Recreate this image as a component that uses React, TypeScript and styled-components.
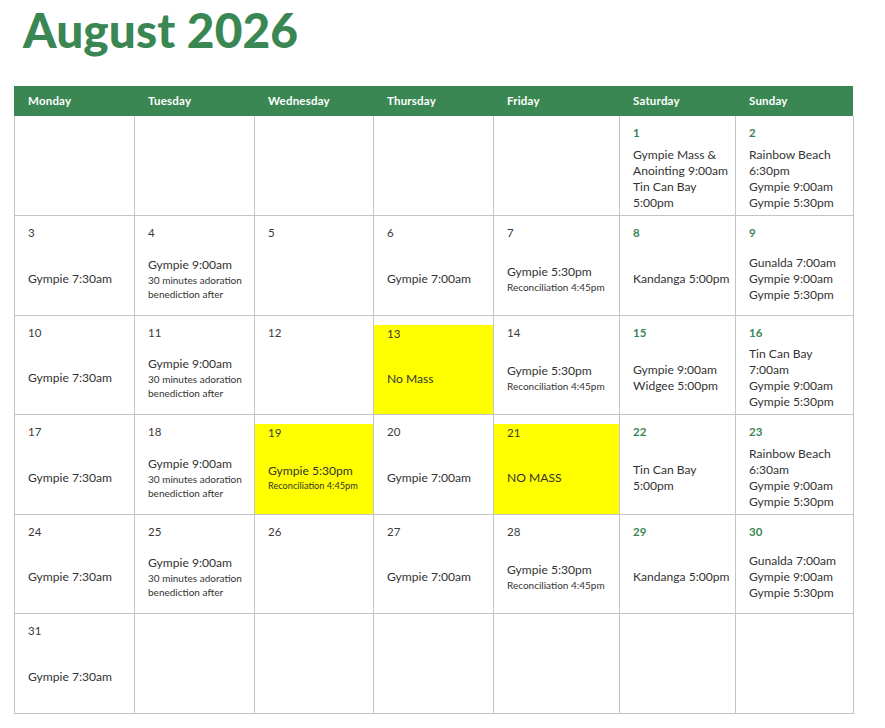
import React from 'react'
import styled, { createGlobalStyle, css } from 'styled-components'

/*
 * Types.
 */

type Size = 'normal' | 'small' | 'tiny'

interface Line {
  text: string
  size?: Size
}

interface Day {
  day?: number
  weekend?: boolean
  highlight?: boolean
  lines?: Line[]
}

/*
 * Data.
 */

const GREEN = '#3b8753'

const weekdays = ['Monday', 'Tuesday', 'Wednesday', 'Thursday', 'Friday', 'Saturday', 'Sunday']
const columns = '120px 120px 119px 120px 126px 116px 118px'
const rowHeights = '100px 100px 99px 100px 99px 100px'

const t = (text: string, size: Size = 'normal'): Line => ({ text, size })

const adoration = [t('Gympie 9:00am'), t('30 minutes adoration', 'small'), t('benediction after', 'small')]
const reconciliation = [t('Gympie 5:30pm'), t('Reconciliation 4:45pm', 'small')]
const sundayMasses = [t('Gunalda 7:00am'), t('Gympie 9:00am'), t('Gympie 5:30pm')]

const days: Day[] = [
  {}, {}, {}, {}, {},
  { day: 1, weekend: true, lines: [t('Gympie Mass &'), t('Anointing 9:00am'), t('Tin Can Bay'), t('5:00pm')] },
  { day: 2, weekend: true, lines: [t('Rainbow Beach'), t('6:30pm'), t('Gympie 9:00am'), t('Gympie 5:30pm')] },

  { day: 3, lines: [t('Gympie 7:30am')] },
  { day: 4, lines: adoration },
  { day: 5 },
  { day: 6, lines: [t('Gympie 7:00am')] },
  { day: 7, lines: reconciliation },
  { day: 8, weekend: true, lines: [t('Kandanga 5:00pm')] },
  { day: 9, weekend: true, lines: sundayMasses },

  { day: 10, lines: [t('Gympie 7:30am')] },
  { day: 11, lines: adoration },
  { day: 12 },
  { day: 13, highlight: true, lines: [t('No Mass')] },
  { day: 14, lines: reconciliation },
  { day: 15, weekend: true, lines: [t('Gympie 9:00am'), t('Widgee 5:00pm')] },
  { day: 16, weekend: true, lines: [t('Tin Can Bay'), t('7:00am'), t('Gympie 9:00am'), t('Gympie 5:30pm')] },

  { day: 17, lines: [t('Gympie 7:30am')] },
  { day: 18, lines: adoration },
  { day: 19, highlight: true, lines: [t('Gympie 5:30pm'), t('Reconciliation 4:45pm', 'tiny')] },
  { day: 20, lines: [t('Gympie 7:00am')] },
  { day: 21, highlight: true, lines: [t('NO MASS')] },
  { day: 22, weekend: true, lines: [t('Tin Can Bay'), t('5:00pm')] },
  { day: 23, weekend: true, lines: [t('Rainbow Beach'), t('6:30am'), t('Gympie 9:00am'), t('Gympie 5:30pm')] },

  { day: 24, lines: [t('Gympie 7:30am')] },
  { day: 25, lines: adoration },
  { day: 26 },
  { day: 27, lines: [t('Gympie 7:00am')] },
  { day: 28, lines: reconciliation },
  { day: 29, weekend: true, lines: [t('Kandanga 5:00pm')] },
  { day: 30, weekend: true, lines: sundayMasses },

  { day: 31, lines: [t('Gympie 7:30am')] },
  {}, {}, {}, {}, {}, {},
]

/*
 * Styles.
 */

const GlobalStyle = createGlobalStyle`
  body {
    margin: 0;
    background: #ffffff;
    font-family: Lato, "Open Sans", "Liberation Sans", sans-serif;
    color: #333333;
  }
`

const Page = styled.div`
  width: 885px;
  padding: 0 0 0 14px;
  box-sizing: border-box;
`

const Title = styled.h1`
  margin: 0 0 26px 9px;
  font-size: 47.8px;
  line-height: 60px;
  font-weight: 900;
  color: ${GREEN};
  letter-spacing: 0.1px;
`

const HeaderBar = styled.div`
  display: grid;
  grid-template-columns: ${columns};
  width: 839px;
  height: 30px;
  padding-left: 1px;
  box-sizing: border-box;
  background: ${GREEN};
`

const HeaderLabel = styled.div`
  display: flex;
  align-items: center;
  padding: 0 0 1px 13px;
  color: #ffffff;
  font-size: 11.5px;
  font-weight: 700;
  letter-spacing: 0.2px;
`

const Grid = styled.div`
  display: grid;
  grid-template-columns: ${columns};
  grid-template-rows: ${rowHeights};
  width: 839px;
  box-sizing: border-box;
  border-left: 1px solid #c4c4c4;
`

const Cell = styled.div`
  display: flex;
  flex-direction: column;
  box-sizing: border-box;
  border-right: 1px solid #c4c4c4;
  border-bottom: 1px solid #c4c4c4;
  min-width: 0;
`

const CellBody = styled.div<{ $highlight?: boolean }>`
  flex: 1;
  display: flex;
  flex-direction: column;
  padding: 8px 4px 0 13px;
  ${({ $highlight }) =>
    $highlight &&
    css`
      margin-top: 9px;
      padding-top: 0;
      background: #ffff00;
    `}
`

const DayNumber = styled.div<{ $weekend?: boolean }>`
  height: 18px;
  line-height: 18px;
  font-size: 11.5px;
  font-weight: ${({ $weekend }) => ($weekend ? 700 : 400)};
  color: ${({ $weekend }) => ($weekend ? GREEN : '#3a3a3a')};
`

const Entries = styled.div`
  flex: 1;
  display: flex;
  flex-direction: column;
  justify-content: center;
`

const sizes: Record<Size, { font: string; line: string }> = {
  normal: { font: '12.1px', line: '16px' },
  small: { font: '10px', line: '14px' },
  tiny: { font: '9.2px', line: '14px' },
}

const Entry = styled.div<{ $size: Size }>`
  font-size: ${({ $size }) => sizes[$size].font};
  line-height: ${({ $size }) => sizes[$size].line};
  color: #333333;
  white-space: nowrap;
`

/*
 * Component.
 */

const DayCell = ({ day, weekend, highlight, lines = [] }: Day) => (
  <Cell>
    <CellBody $highlight={highlight}>
      {day !== undefined && <DayNumber $weekend={weekend}>{day}</DayNumber>}
      <Entries>
        {lines.map((line, i) => (
          <Entry key={i} $size={line.size ?? 'normal'}>
            {line.text}
          </Entry>
        ))}
      </Entries>
    </CellBody>
  </Cell>
)

export default function App() {
  return (
    <>
      <GlobalStyle />
      <Page>
        <Title>August 2026</Title>
        <HeaderBar>
          {weekdays.map((name) => (
            <HeaderLabel key={name}>{name}</HeaderLabel>
          ))}
        </HeaderBar>
        <Grid>
          {days.map((d, i) => (
            <DayCell key={i} {...d} />
          ))}
        </Grid>
      </Page>
    </>
  )
}
